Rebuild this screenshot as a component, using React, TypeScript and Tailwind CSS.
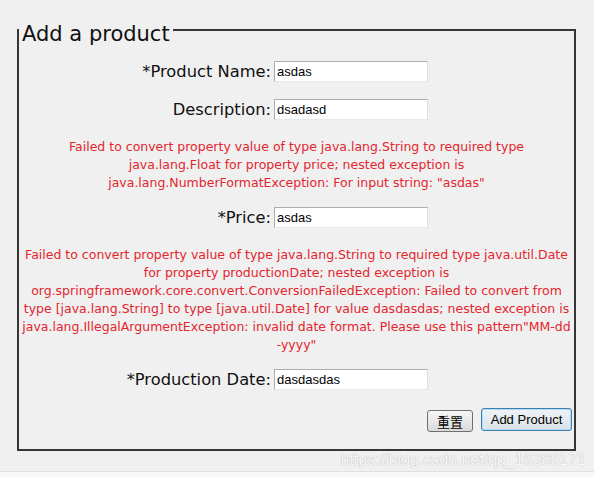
import React from "react";

const priceError = [
  "Failed to convert property value of type java.lang.String to required type",
  "java.lang.Float for property price; nested exception is",
  'java.lang.NumberFormatException: For input string: "asdas"',
];

const dateError = [
  "Failed to convert property value of type java.lang.String to required type java.util.Date",
  "for property productionDate; nested exception is",
  "org.springframework.core.convert.ConversionFailedException: Failed to convert from",
  "type [java.lang.String] to type [java.util.Date] for value dasdasdas; nested exception is",
  'java.lang.IllegalArgumentException: invalid date format. Please use this pattern"MM-dd',
  '-yyyy"',
];

function Field({ label, value }: { label: string; value: string }) {
  return (
    <div className="flex items-center">
      <label className="w-[252px] text-right font-['DejaVu_Sans',sans-serif] text-[16.3px] leading-[21px] text-[#111]">
        {label}
      </label>
      <input
        readOnly
        value={value}
        className="ml-[3px] h-[21px] w-[154px] border border-[#abadb3] border-b-[#e3e9ef] border-r-[#dbdfe6] bg-white px-[2px] font-['Liberation_Sans',Arial,sans-serif] text-[13px] text-black outline-none"
      />
    </div>
  );
}

function ErrorText({ lines }: { lines: string[] }) {
  return (
    <div className="whitespace-nowrap text-center font-['DejaVu_Sans',sans-serif] text-[12.5px] leading-[18px] text-[#e3262e]">
      {lines.map((l, i) => (
        <div key={i}>{l}</div>
      ))}
    </div>
  );
}

export default function App() {
  return (
    <div className="relative h-[477px] overflow-hidden bg-[#f8f8f8]">
      <div className="h-[472px] border-b border-[#e0e0e0] bg-[#f0f0f0] pt-[14px]">
        <fieldset className="ml-[17px] w-[559px] border-2 border-[#363636] pb-[17px]">
          <legend className="px-[3px] pt-2 font-['DejaVu_Sans',sans-serif] text-[21px] leading-[24px] text-[#111]">
            Add a product
          </legend>
          <div className="mt-[15px] flex flex-col">
            <Field label="*Product Name:" value="asdas" />
            <div className="mt-[17px]">
              <Field label="Description:" value="dsadasd" />
            </div>
            <div className="mt-[18px]">
              <ErrorText lines={priceError} />
            </div>
            <div className="mt-[15px]">
              <Field label="*Price:" value="asdas" />
            </div>
            <div className="mt-[18px]">
              <ErrorText lines={dateError} />
            </div>
            <div className="mt-[15px]">
              <Field label="*Production Date:" value="dasdasdas" />
            </div>
            <div className="mt-[18px] flex items-start justify-end gap-2 pr-[2px]">
              <button className="mt-[2px] h-[22px] w-[46px] rounded-[3px] border border-[#707070] bg-linear-to-b from-[#f6f6f6] to-[#dadada] font-['Noto_Sans_CJK_SC',sans-serif] text-[13px] leading-none text-black">
                重置
              </button>
              <button className="h-[23px] w-[91px] rounded-[3px] border border-[#3c7fb1] bg-linear-to-b from-[#eef3f7] to-[#dbe2e8] font-['Liberation_Sans',Arial,sans-serif] text-[13px] leading-none text-black shadow-[inset_0_0_0_1px_#b4dcf4]">
                Add Product
              </button>
            </div>
          </div>
        </fieldset>
      </div>
      <div className="absolute right-[8px] top-[450px] font-['Liberation_Sans',Arial,sans-serif] text-[16px] leading-[20px] text-[#fafafa] [text-shadow:0_0_1px_#999]">
        https://blog.csdn.net/qq_16388171
      </div>
    </div>
  );
}
